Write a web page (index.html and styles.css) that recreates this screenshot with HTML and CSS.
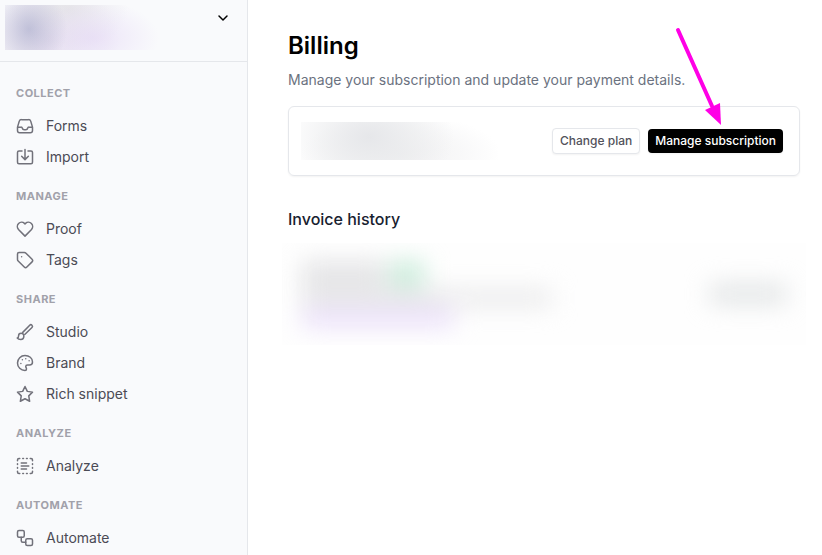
FILE: index.html
```
<!DOCTYPE html>
<html lang="en">
<head>
    <meta charset="UTF-8">
    <meta name="viewport" content="width=device-width, initial-scale=1.0">
    <title>Billing</title>
    <link rel="stylesheet" href="styles.css">
</head>
<body>
    <aside class="sidebar">
        <div class="workspace">
            <div class="workspace-name"></div>
            <button class="workspace-toggle" type="button" aria-label="Switch workspace">
                <svg width="12" height="12" viewBox="0 0 12 12"><path d="M2 4l4 4 4-4"/></svg>
            </button>
        </div>

        <nav class="nav">
            <section class="nav-group">
                <h2>COLLECT</h2>
                <a href="#">
                    <svg viewBox="0 0 24 24"><path d="M2 13.500h4.500a2 2 0 0 1 2 1.500 2.500 2.500 0 0 0 2.500 2h2a2.500 2.500 0 0 0 2.500-2 2 2 0 0 1 2-1.500H22M2 13.500V18a3 3 0 0 0 3 3h14a3 3 0 0 0 3-3v-4.500L19.600 5.500A3 3 0 0 0 16.700 3.500H7.300A3 3 0 0 0 4.400 5.500z"/></svg>
                    Forms
                </a>
                <a href="#">
                    <svg viewBox="0 0 24 24"><path d="M8 4H4a2 2 0 0 0-2 2v13a2 2 0 0 0 2 2h16a2 2 0 0 0 2-2V6a2 2 0 0 0-2-2h-4M12 2v13M7.500 11l4.500 4.500 4.500-4.500"/></svg>
                    Import
                </a>
            </section>
            <section class="nav-group">
                <h2>MANAGE</h2>
                <a href="#">
                    <svg viewBox="0 0 24 24"><path d="M12 21.500L3.300 12.600a5.700 5.700 0 0 1 8-8.100l.700.700.700-.700a5.700 5.700 0 0 1 8 8.100z"/></svg>
                    Proof
                </a>
                <a href="#">
                    <svg viewBox="0 0 24 24"><path d="M2 4a2 2 0 0 1 2-2h7.200a3 3 0 0 1 2.100.900l8.100 8.100a2.500 2.500 0 0 1 0 3.500l-6.900 6.900a2.500 2.500 0 0 1-3.500 0l-8.100-8.100A3 3 0 0 1 2 11.200zM7.500 7.500v.1"/></svg>
                    Tags
                </a>
            </section>
            <section class="nav-group">
                <h2>SHARE</h2>
                <a href="#">
                    <svg viewBox="0 0 24 24"><path d="M9 12.500l9.300-9.600a2.100 2.100 0 0 1 3 3L12 15M10.500 17a3.700 3.700 0 0 0-3.700-3.300c-2 0-3.400 1.500-3.400 3.500 0 1.500-.5 2.500-1.700 2.800 1 1.400 2.600 2 4.600 2 2.600 0 4.200-2 4.200-5z"/></svg>
                    Studio
                </a>
                <a href="#">
                    <svg viewBox="0 0 24 24"><path d="M12 2a10 10 0 1 0 0 20c1.500 0 2-1 2-2 0-1.500-1-2-1-3.200 0-1.300 1-2.300 2.300-2.300H18c2.500 0 4-1.500 4-4C22 5.500 17.500 2 12 2zM6.500 12.500v.1M8.500 7.700v.1M13 6.200v.1M17.500 9v.1"/></svg>
                    Brand
                </a>
                <a href="#">
                    <svg viewBox="0 0 24 24"><path d="M12 2l3.100 6.500 6.900 1-5 5 1.200 7.200L12 18.300l-6.200 3.400L7 14.500l-5-5 6.900-1z"/></svg>
                    Rich snippet
                </a>
            </section>
            <section class="nav-group">
                <h2>ANALYZE</h2>
                <a href="#">
                    <svg viewBox="0 0 24 24"><path d="M2 5V4a2 2 0 0 1 2-2h1M9 2h1M14 2h1M19 2h1a2 2 0 0 1 2 2v1M22 9v1M22 14v1M22 19v1a2 2 0 0 1-2 2h-1M15 22h-1M10 22H9M5 22H4a2 2 0 0 1-2-2v-1M2 15v-1M2 10V9M7 8h7M7 12h10M7 16h7"/></svg>
                    Analyze
                </a>
            </section>
            <section class="nav-group">
                <h2>AUTOMATE</h2>
                <a href="#">
                    <svg viewBox="0 0 24 24"><rect x="2" y="2" width="9" height="9" rx="2"/><rect x="13" y="13" width="9" height="9" rx="2"/><path d="M7 11v4.500a2 2 0 0 0 2 2h4"/></svg>
                    Automate
                </a>
            </section>
        </nav>
    </aside>

    <main class="content">
        <h1>Billing</h1>
        <p class="intro">Manage your subscription and update your payment details.</p>

        <div class="plan-card">
            <div class="plan-details"></div>
            <div class="plan-actions">
                <button class="btn" type="button">Change plan</button>
                <button class="btn btn-primary" type="button">Manage subscription</button>
            </div>
            <!-- Pointer to the manage button -->
            <svg class="arrow" width="60" height="104" viewBox="0 0 60 104" aria-hidden="true">
                <path class="arrow-line" d="M8 6l34 76"/>
                <path class="arrow-head" d="M35 86l15-7 1 22z"/>
            </svg>
        </div>

        <h2 class="section-title">Invoice history</h2>
        <!-- Redacted invoice row -->
        <div class="invoices">
            <div class="invoice-blur">
                <div class="invoice-lines">
                    <div class="line-title"><span class="bar bar-name"></span><span class="bar bar-status"></span></div>
                    <span class="bar bar-text"></span>
                    <span class="bar bar-link"></span>
                </div>
                <span class="bar bar-button"></span>
            </div>
        </div>
    </main>
</body>
</html>
```

FILE: styles.css
```
* {
    margin: 0;
    padding: 0;
    box-sizing: border-box;
}
body {
    font-family: Inter, "Open Sans", sans-serif;
    font-size: 14px;
    line-height: 20px;
    display: flex;
    min-height: 100vh;
    background-color: #fff;
    color: #4b5563;
}
button {
    font-family: inherit;
    cursor: pointer;
}
svg {
    fill: none;
    stroke: currentColor;
    stroke-linecap: round;
    stroke-linejoin: round;
}

/* Sidebar */
.sidebar {
    flex: 0 0 248px;
    background-color: #f9fafc;
    border-right: 1px solid #e5e7eb;
}
.workspace {
    display: flex;
    align-items: flex-start;
    justify-content: space-between;
    height: 62px;
    padding: 5px 16px 0 5px;
    border-bottom: 1px solid #e5e7eb;
}
.workspace-name {
    width: 160px;
    height: 45px;
    background:
        radial-gradient(ellipse 38px 42px at 24px 24px, rgba(174, 176, 207, 0.7), rgba(180, 180, 210, 0.4) 45%, transparent),
        radial-gradient(ellipse 66px 38px at 88px 33px, rgba(229, 216, 246, 0.65), rgba(232, 222, 247, 0.4) 50%, transparent),
        radial-gradient(ellipse 60px 40px at 64px 4px, rgba(224, 224, 226, 0.7), rgba(226, 226, 228, 0.3) 55%, transparent),
        radial-gradient(ellipse 70px 60px at 44px 34px, rgba(222, 212, 230, 0.7), transparent);
}
.workspace-toggle {
    display: flex;
    padding: 7px 2px;
    border: none;
    background: none;
    color: #000;
}
.workspace-toggle svg {
    stroke-width: 1.5;
}
.nav {
    display: flex;
    flex-direction: column;
    gap: 16px;
    padding: 23px 16px 0;
}
.nav-group h2 {
    margin-bottom: 9px;
    font-size: 11px;
    font-weight: 700;
    line-height: 16px;
    letter-spacing: 0.5px;
    color: #a1a1aa;
}
.nav-group a {
    display: flex;
    align-items: center;
    gap: 12px;
    height: 31px;
    color: #4b4b55;
    text-decoration: none;
}
.nav-group svg {
    width: 18px;
    height: 18px;
    overflow: visible;
    stroke-width: 2;
    color: #71717a;
}

/* Content */
.content {
    flex: 1;
    min-width: 0;
    padding: 30px 22px 0 40px;
}
h1 {
    margin-bottom: 8px;
    font-size: 24px;
    font-weight: 600;
    line-height: 32px;
    color: #000;
}
.intro {
    color: #6b7280;
}
.plan-card {
    position: relative;
    display: flex;
    align-items: center;
    justify-content: space-between;
    gap: 16px;
    min-height: 70px;
    margin-top: 16px;
    padding: 12px 16px 12px 12px;
    border: 1px solid #e5e7eb;
    border-radius: 6px;
    box-shadow: 0 1px 2px rgba(0, 0, 0, 0.05);
}
.plan-details {
    flex: 0 1 197px;
    height: 38px;
    background:
        radial-gradient(ellipse 85px 60px at 68px 15px, #e6e7ea, rgba(233, 234, 236, 0.6) 50%, transparent),
        radial-gradient(ellipse 100px 40px at 100px 32px, #f1f1f2, rgba(244, 244, 245, 0.6) 60%, transparent);
}
.plan-actions {
    display: flex;
    align-items: center;
    gap: 8px;
}
.btn {
    height: 26px;
    padding: 0 7px;
    border: 1px solid #e5e7eb;
    border-radius: 4px;
    background-color: #fff;
    box-shadow: 0 1px 2px rgba(0, 0, 0, 0.05);
    font-size: 12px;
    font-weight: 500;
    line-height: 16px;
    color: #52525b;
}
.btn-primary {
    height: 24px;
    border: none;
    background-color: #000;
    color: #fff;
}
.arrow {
    position: absolute;
    top: -83px;
    right: 69px;
    color: #ff00e6;
    pointer-events: none;
}
.arrow-line {
    stroke-width: 4;
}
.arrow-head {
    fill: currentColor;
    stroke: none;
}
.section-title {
    margin-top: 31px;
    font-size: 16px;
    font-weight: 500;
    line-height: 24px;
    color: #18212f;
}
.invoices {
    margin: 12px -6px 0;
    overflow: hidden;
    background-color: #fefefe;
}
.invoice-blur {
    display: flex;
    align-items: center;
    justify-content: space-between;
    gap: 16px;
    height: 102px;
    padding: 0 20px;
    filter: blur(12px);
}
.invoice-lines {
    display: flex;
    flex-direction: column;
    gap: 4px;
}
.line-title {
    display: flex;
    gap: 4px;
}
.bar {
    height: 16px;
    background-color: #e2e2e4;
}
.bar-name {
    width: 84px;
    height: 24px;
}
.bar-status {
    width: 34px;
    height: 24px;
    background-color: #c6ebd8;
}
.bar-text {
    width: 250px;
    background: linear-gradient(90deg, #e2e2e4 50%, #e9e9ea 60%);
}
.bar-link {
    width: 152px;
    background-color: #e9dcfb;
}
.bar-button {
    width: 76px;
    height: 18px;
    background-color: #dfe2e3;
}
```
